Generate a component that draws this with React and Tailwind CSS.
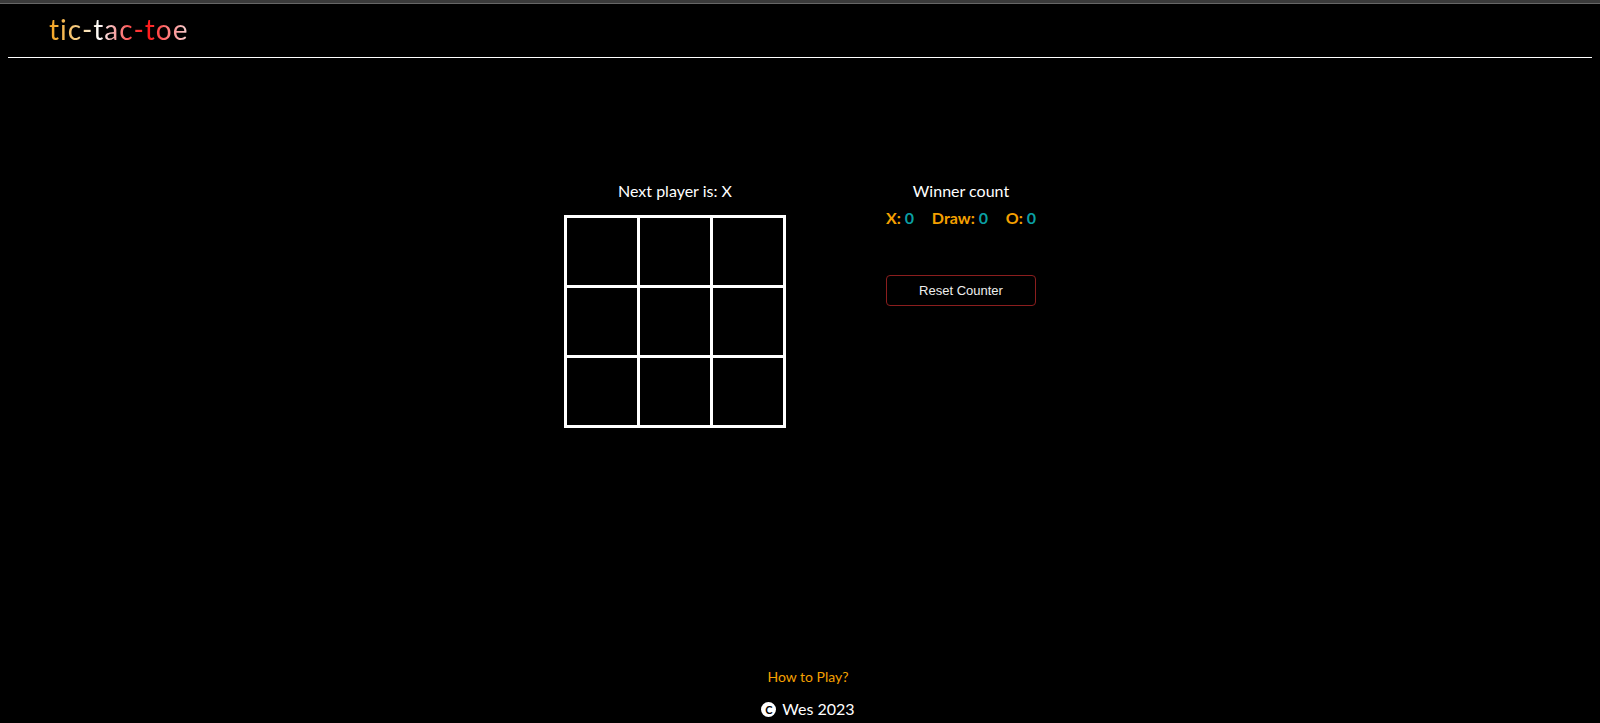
import { useState } from 'react'

const font = "font-['Lato','Noto_Sans',sans-serif]"

function Square({ value, onClick }) {
  return (
    <button onClick={onClick} className="w-[70px] h-[67px] bg-black text-white text-4xl font-bold flex items-center justify-center">
      {value}
    </button>
  )
}

export default function App() {
  const [squares, setSquares] = useState(Array(9).fill(null))
  const [xNext, setXNext] = useState(true)
  const [count, setCount] = useState({ x: 0, draw: 0, o: 0 })

  const play = (i) => {
    if (squares[i]) return
    const next = squares.slice()
    next[i] = xNext ? 'X' : 'O'
    setSquares(next)
    setXNext(!xNext)
  }

  return (
    <div className={`min-h-screen bg-black flex flex-col ${font}`}>
      <div className="h-[4px] bg-[#3a3a3a] border-b border-[#666]" />

      {/* header */}
      <header className="mx-2 h-[54px] border-b border-white flex items-center pl-[41px]">
        <h1 className="text-[28px] leading-none tracking-[1px] text-transparent bg-clip-text bg-[linear-gradient(90deg,#f5a21c_0%,#f8d28e_22%,#ffffff_36%,#f7a0a0_48%,#ff4242_60%,#ff1a1a_72%,#ff8080_86%,#f6d0d0_100%)] pb-[3px]">
          tic-tac-toe
        </h1>
      </header>

      {/* game */}
      <main className="flex-1 flex justify-center gap-[100px] pt-[121px]">
        <div className="flex flex-col items-center w-[222px]">
          <p className="text-white text-[16px] leading-6">Next player is: {xNext ? 'X' : 'O'}</p>
          <div className="mt-3 grid grid-cols-3 gap-[3px] p-[3px] bg-white">
            {squares.map((v, i) => <Square key={i} value={v} onClick={() => play(i)} />)}
          </div>
        </div>

        <div className="flex flex-col items-center w-[150px]">
          <p className="text-white text-[16px] leading-6">Winner count</p>
          <div className="mt-[3px] w-full flex justify-between text-[16px] leading-6 font-bold">
            <span><span className="text-[#f5a000]">X:</span> <span className="text-[#0a9fa3]">{count.x}</span></span>
            <span><span className="text-[#f5a000]">Draw:</span> <span className="text-[#0a9fa3]">{count.draw}</span></span>
            <span><span className="text-[#f5a000]">O:</span> <span className="text-[#0a9fa3]">{count.o}</span></span>
          </div>
          <button onClick={() => setCount({ x: 0, draw: 0, o: 0 })} className="mt-[45px] w-full h-[31px] border border-[#8b1e1e] rounded-[4px] text-[#eee] text-[13px] font-['Liberation_Sans',Arial,sans-serif]">
            Reset Counter
          </button>
        </div>
      </main>

      {/* footer */}
      <footer className="flex flex-col items-center pl-4 pb-[2px]">
        <a className="text-[#f5a000] text-[14px] leading-5 cursor-pointer">How to Play?</a>
        <p className="mt-[10px] text-white text-[16px] leading-6 flex items-center gap-[6px]">
          <span className="w-[15px] h-[15px] rounded-full bg-white text-black text-[11px] font-bold flex items-center justify-center leading-none">C</span>
          Wes 2023
        </p>
      </footer>
    </div>
  )
}
